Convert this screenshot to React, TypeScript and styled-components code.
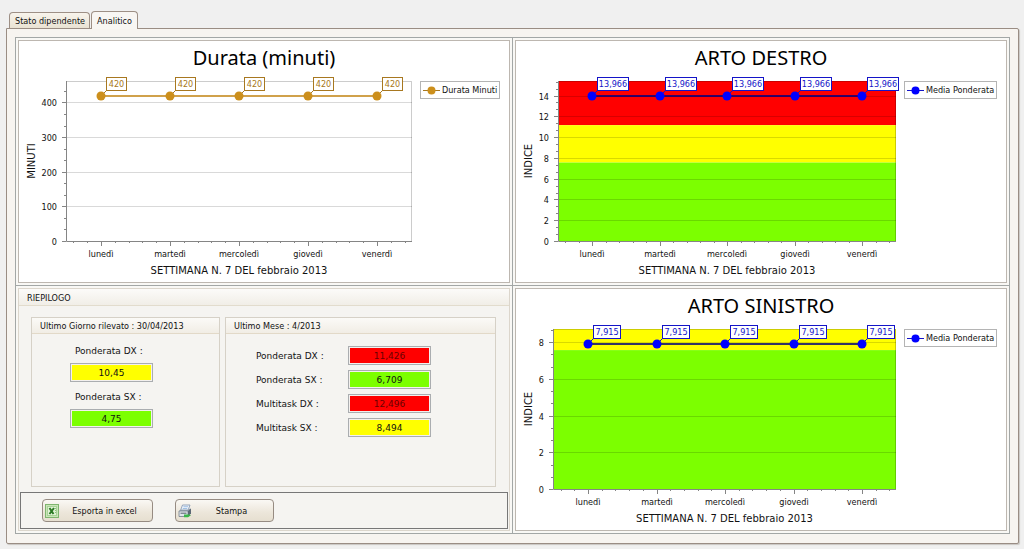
import React from 'react';
import styled, { createGlobalStyle } from 'styled-components';

const narrow = '"DejaVu Sans Condensed", "DejaVu Sans", sans-serif';
const wide = '"DejaVu Sans", sans-serif';
const heading = '"Noto Sans", "DejaVu Sans", sans-serif';

const GlobalStyle = createGlobalStyle`
  * { box-sizing: border-box; }
  body {
    margin: 0;
    background: #f0f0f0;
    color: #111;
    font: 9px/12px ${narrow};
  }
`;

const Page = styled.div`
  padding: 11px 5px 5px 6px;
`;

const TabList = styled.div`
  display: flex;
  align-items: flex-end;
  gap: 1px;
  padding-left: 3px;
`;

const Tab = styled.button<{ $active?: boolean }>`
  height: ${p => (p.$active ? 18 : 16)}px;
  margin-bottom: ${p => (p.$active ? -1 : 0)}px;
  padding: ${p => (p.$active ? '1px 5px 0' : '1px 4px 0 5px')};
  position: relative;
  border: 1px solid #9d8f85;
  border-bottom: ${p => (p.$active ? 'none' : '0')};
  border-radius: 4px 4px 0 0;
  background: ${p => (p.$active ? '#f8f6f3' : 'linear-gradient(#f8f4ec, #e9e2d3)')};
  color: #111;
  font: 9px/12px ${narrow};
  white-space: nowrap;
`;

const Frame = styled.main`
  border: 1px solid #9a8d84;
  border-radius: 0 2px 2px 2px;
  padding: 8px 8px 9px;
  background: #f7f4f0;
  box-shadow: 1px 1px 1px #c9c6c2;
`;

const Board = styled.div`
  display: grid;
  grid-template-columns: 1fr 1fr;
  gap: 1px;
  padding: 1px;
  background: #a3a7a6;
`;

const Cell = styled.div`
  min-width: 0;
  padding: 2px;
  background: #f9f8f5;
  display: flex;
`;

const ChartPanel = styled.section`
  flex: 1;
  min-width: 0;
  border: 1px solid #bdb7b0;
  background: #fff;
`;

const ChartTitle = styled.h2`
  margin: 0;
  height: 34px;
  padding-top: 5px;
  font: 20px/24px ${heading};
  color: #000;
  text-align: center;
`;

const ChartBody = styled.div`
  display: flex;
  align-items: flex-start;
  padding-right: 9px;
`;

const Plot = styled.svg`
  display: block;
  flex: 1;
  min-width: 0;
  height: auto;
  overflow: visible;
  font-family: ${narrow};
  font-size: 9px;
`;

const AxisTitle = styled.text`
  font-family: ${wide};
  font-size: 10px;
  text-anchor: middle;
`;

const Legend = styled.div<{ $width: number }>`
  flex: none;
  display: flex;
  align-items: center;
  gap: 2px;
  width: ${p => p.$width}px;
  height: 18px;
  margin-top: 6px;
  padding-left: 2px;
  border: 1px solid #b4b4b4;
  white-space: nowrap;
`;

type Band = { from: number; to: number; color: string };
type ChartProps = {
  title: string;
  series: string;
  unit: string;
  value: number;
  label: string;
  labelWidth: number;
  max: number;
  step: number;
  width: number;
  left: number;
  right: number;
  first: number;
  spacing: number;
  legendWidth: number;
  color: string;
  ink: string;
  lineInk: string;
  bands?: Band[];
};

const DAYS = ['lunedì', 'martedì', 'mercoledì', 'giovedì', 'venerdì'];
const TOP = 6;
const BOTTOM = 166;

function Chart(c: ChartProps) {
  const y = (v: number) => BOTTOM - (v / c.max) * (BOTTOM - TOP);
  const crisp = (v: number) => Math.round(y(v)) + 0.5;
  const majors: number[] = [];
  for (let v = 0; v <= c.max; v += c.step) majors.push(v);
  const minors: number[] = [];
  for (let i = 1; (i * c.step) / 3 <= c.max; i++) if (i % 3) minors.push((i * c.step) / 3);
  const xs = DAYS.map((_, i) => Math.round(c.first + i * c.spacing));
  const minorXs: number[] = [];
  for (let i = -2; i <= 22; i++) if (i % 5) minorXs.push(Math.round(c.first + (i * c.spacing) / 5));
  const middle = (c.left + c.right) / 2;
  const py = Math.round(y(c.value));

  return (
    <ChartPanel>
      <ChartTitle>{c.title}</ChartTitle>
      <ChartBody>
        <Plot viewBox={`0 0 ${c.width} 207`} role="img" aria-label={c.title}>
          {c.bands?.map(b => (
            <rect key={b.color} x={c.left} width={c.right - c.left} y={y(b.to)} height={y(b.from) - y(b.to)} fill={b.color} />
          ))}
          <path d={`M${c.left} ${TOP + 0.5}H${c.right - 0.5}V${BOTTOM}`} fill="none" stroke="#000" strokeOpacity="0.2" />
          {majors.slice(1).map(v => (
            <path key={v} d={`M${c.left} ${crisp(v)}H${c.right}`} stroke="#000" strokeOpacity="0.15" />
          ))}
          <g stroke="#858585">
            <path d={`M${c.left + 0.5} ${TOP}V${BOTTOM + 0.5}H${c.right}`} fill="none" />
            {majors.map(v => <path key={v} d={`M${c.left - 4} ${crisp(v)}h4`} />)}
            {minors.map(v => <path key={v} d={`M${c.left - 2} ${crisp(v)}h2`} />)}
            {xs.map(x => <path key={x} d={`M${x + 0.5} ${BOTTOM + 1}v4`} />)}
            {minorXs.map(x => <path key={x} d={`M${x + 0.5} ${BOTTOM + 1}v1`} />)}
          </g>
          <g fill="#111">
            {majors.map(v => (
              <text key={v} x={c.left - 9} y={Math.round(y(v)) + 4} textAnchor="end">{v}</text>
            ))}
            {DAYS.map((d, i) => (
              <text key={d} x={xs[i]} y={182} textAnchor="middle">{d}</text>
            ))}
            <AxisTitle x={middle} y={199}>SETTIMANA N. 7 DEL febbraio 2013</AxisTitle>
            <AxisTitle transform={`translate(16 ${(TOP + BOTTOM) / 2}) rotate(-90)`}>{c.unit}</AxisTitle>
          </g>
          <path d={`M${xs[0]} ${py}H${xs[4]}`} stroke={c.lineInk} strokeWidth="2" strokeOpacity="0.8" />
          {xs.map(x => (
            <g key={x}>
              <path d={`M${x} ${py}l6 -6`} stroke={c.ink} />
              <circle cx={x} cy={py} r="4.5" fill={c.color} />
              <rect x={x + 5.5} y={py - 18.5} width={c.labelWidth} height="13" fill="#fff" stroke={c.ink} />
              <text x={x + 5.5 + c.labelWidth / 2} y={py - 9} textAnchor="middle" fill={c.ink}>{c.label}</text>
            </g>
          ))}
        </Plot>
        <Legend $width={c.legendWidth}>
          <svg width="17" height="9" aria-hidden="true">
            <path d="M0 4.5H17" stroke={c.ink} />
            <circle cx="8.5" cy="4.5" r="4" fill={c.color} />
          </svg>
          {c.series}
        </Legend>
      </ChartBody>
    </ChartPanel>
  );
}

const Summary = styled.section`
  flex: 1;
  min-width: 0;
  display: flex;
  flex-direction: column;
  border: 1px solid #dcd6cc;
  padding: 0 1px 1px;
  background: #f5f4f1;
`;

const SummaryTitle = styled.h2`
  margin: 0 -1px;
  height: 17px;
  padding: 3px 8px 0;
  border-bottom: 1px solid #e2dccd;
  background: linear-gradient(#fcfbf9, #f1eee7);
  font: 9px/12px ${narrow};
`;

const Groups = styled.div`
  flex: 1;
  display: grid;
  grid-template-columns: 189fr 271fr;
  gap: 5px;
  padding: 11px 12px 5px 11px;
`;

const Group = styled.fieldset`
  min-width: 0;
  margin: 0;
  padding: 0;
  border: 1px solid #d6d1c7;
`;

const GroupTitle = styled.legend`
  float: left;
  width: 100%;
  height: 16px;
  padding: 2px 8px 0;
  border-bottom: 1px solid #e2d9c8;
  background: linear-gradient(#fbfaf7, #f1ede5);
  line-height: 12px;
`;

const Stack = styled.div`
  clear: both;
  display: flex;
  flex-direction: column;
  align-items: flex-start;
  padding: 11px 0 0 38px;
`;

const Pairs = styled.div`
  clear: both;
  display: grid;
  grid-template-columns: 92px 83px;
  align-items: center;
  row-gap: 5px;
  padding: 12px 0 0 30px;
`;

const FieldLabel = styled.label`
  font: 9px/12px ${wide};
  white-space: nowrap;
  ${Stack} & {
    padding: 0 0 6px 5px;
  }
`;

const Value = styled.input<{ $fill: string; $ink?: string }>`
  width: 83px;
  height: 19px;
  padding: 0;
  border: 1px solid #aaadb0;
  border-radius: 0;
  background: ${p => p.$fill};
  box-shadow: inset 0 0 0 1px #f3f0ee;
  color: ${p => p.$ink ?? '#111'};
  font: 9px/12px ${wide};
  text-align: center;
  outline: none;
  ${Stack} & {
    margin-bottom: 9px;
  }
`;

const Toolbar = styled.div`
  display: flex;
  align-items: center;
  gap: 22px;
  height: 37px;
  padding-left: 21px;
  border: 1px solid #777;
`;

const ToolButton = styled.button<{ $width: number }>`
  display: flex;
  align-items: center;
  width: ${p => p.$width}px;
  height: 23px;
  padding: 0 2px;
  border: 1px solid #968b82;
  border-radius: 4px;
  background: linear-gradient(#faf8f4, #ece6da 60%, #e6dfd0);
  color: #111;
  font: 9px/12px ${narrow};
  svg { flex: none; }
`;

const ButtonText = styled.span`
  flex: 1;
  text-align: center;
`;

const RED = '#ff0000';
const YELLOW = '#ffff00';
const GREEN = '#7cff00';

const month = [
  { id: 'mpdx', label: 'Ponderata DX :', value: '11,426', fill: RED, ink: '#6a0000' },
  { id: 'mpsx', label: 'Ponderata SX :', value: '6,709', fill: GREEN },
  { id: 'mmdx', label: 'Multitask DX :', value: '12,496', fill: RED, ink: '#6a0000' },
  { id: 'mmsx', label: 'Multitask SX :', value: '8,494', fill: YELLOW },
];

const day = [
  { id: 'dpdx', label: 'Ponderata DX :', value: '10,45', fill: YELLOW },
  { id: 'dpsx', label: 'Ponderata SX :', value: '4,75', fill: GREEN },
];

const ExcelIcon = () => (
  <svg width="14" height="14" viewBox="0 0 14 14" aria-hidden="true">
    <rect x="0.5" y="0.5" width="13" height="13" fill="#c9e6b8" stroke="#7fb56f" />
    <rect x="2.5" y="2.5" width="9" height="9" fill="#e2f3d8" stroke="#a8d197" />
    <path d="M4.5 4l4 6M9 4L4.5 10" stroke="#2c7a24" strokeWidth="2" />
    <path d="M10.5 4v6" stroke="#8fc47d" strokeDasharray="1 1" />
  </svg>
);

const PrinterIcon = () => (
  <svg width="14" height="14" viewBox="0 0 14 14" aria-hidden="true">
    <path d="M4.5 1h7.5l-2 5.5H2.5z" fill="#eef4fb" stroke="#7d92ad" strokeWidth="0.8" />
    <path d="M5.5 2.7h4.5M4.8 4.5h4.4" stroke="#8db3de" strokeWidth="0.8" />
    <path d="M1 7l2-1.5h7L12.5 4.5V9l-2.5 3.5H1z" fill="#9aa7b5" />
    <path d="M1 7h9v5.5H1z" fill="#dfe5ec" stroke="#74808e" strokeWidth="0.8" />
    <path d="M10 7l3-2.5v5L10 12.5z" fill="#5c6875" />
    <path d="M2.5 9.2h6" stroke="#55606c" />
    <path d="M6 10.5h5l2 .8-3 2H6z" fill="#39b54a" />
  </svg>
);

const blue = { color: '#0000ff', ink: '#1414c8', lineInk: '#000080' };

export default function App() {
  return (
    <Page>
      <GlobalStyle />
      <TabList role="tablist">
        <Tab role="tab" aria-selected={false}>Stato dipendente</Tab>
        <Tab role="tab" aria-selected $active>Analitico</Tab>
      </TabList>
      <Frame>
        <Board>
          <Cell>
            <Chart title="Durata (minuti)" series="Durata Minuti" unit="MINUTI" value={420} label="420" labelWidth={20}
              max={462} step={100} width={401} left={47} right={393} first={82} spacing={69} legendWidth={80}
              color="#cc8f1c" ink="#a87820" lineInk="#c48a1e" />
          </Cell>
          <Cell>
            <Chart title="ARTO DESTRO" series="Media Ponderata" unit="INDICE" value={13.966} label="13,966" labelWidth={31}
              max={15.4} step={2} width={388} left={42} right={380} first={76} spacing={67.5} legendWidth={93} {...blue}
              bands={[{ from: 11.15, to: 15.4, color: RED }, { from: 7.55, to: 11.15, color: YELLOW }, { from: 0, to: 7.55, color: GREEN }]} />
          </Cell>
          <Cell>
            <Summary>
              <SummaryTitle>RIEPILOGO</SummaryTitle>
              <Groups>
                <Group>
                  <GroupTitle>Ultimo Giorno rilevato : 30/04/2013</GroupTitle>
                  <Stack>
                    {day.map(f => (
                      <React.Fragment key={f.id}>
                        <FieldLabel htmlFor={f.id}>{f.label}</FieldLabel>
                        <Value id={f.id} readOnly value={f.value} $fill={f.fill} />
                      </React.Fragment>
                    ))}
                  </Stack>
                </Group>
                <Group>
                  <GroupTitle>Ultimo Mese : 4/2013</GroupTitle>
                  <Pairs>
                    {month.map(f => (
                      <React.Fragment key={f.id}>
                        <FieldLabel htmlFor={f.id}>{f.label}</FieldLabel>
                        <Value id={f.id} readOnly value={f.value} $fill={f.fill} $ink={f.ink} />
                      </React.Fragment>
                    ))}
                  </Pairs>
                </Group>
              </Groups>
              <Toolbar>
                <ToolButton $width={111}><ExcelIcon /><ButtonText>Esporta in excel</ButtonText></ToolButton>
                <ToolButton $width={99}><PrinterIcon /><ButtonText>Stampa</ButtonText></ToolButton>
              </Toolbar>
            </Summary>
          </Cell>
          <Cell>
            <Chart title="ARTO SINISTRO" series="Media Ponderata" unit="INDICE" value={7.915} label="7,915" labelWidth={27}
              max={8.72} step={2} width={388} left={37} right={380} first={72} spacing={68.5} legendWidth={93} {...blue}
              bands={[{ from: 7.57, to: 8.72, color: YELLOW }, { from: 0, to: 7.57, color: GREEN }]} />
          </Cell>
        </Board>
      </Frame>
    </Page>
  );
}
